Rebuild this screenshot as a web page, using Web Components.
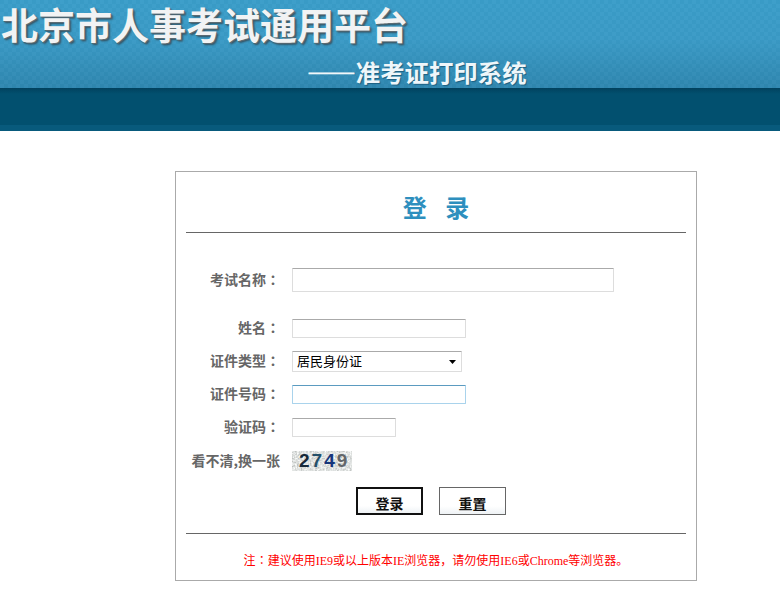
<!DOCTYPE html>
<html lang="zh">
<head>
<meta charset="utf-8">
<title>准考证打印系统</title>
<style>
	html, body { margin: 0; padding: 0; background: #fff; }
	body { font-family: "Liberation Sans", "Noto Sans CJK SC", sans-serif; overflow: hidden; }
	[slot="actions"] { display: flex; gap: 16px; padding-left: 170px; }
	[slot="note"] i { font: 12px "Liberation Serif", serif; }
	[slot="note"] b { font: 12px "Noto Sans CJK TC", sans-serif; }
	[slot="subtitle"] b { font-weight: 700; -webkit-text-stroke: .6px #f4f8fa; text-shadow: none; }
</style>
</head>
<body>
<app-header>
	<span slot="title">北京市人事考试通用平台</span>
	<span slot="subtitle"><b>——</b>准考证打印系统</span>
</app-header>
<login-card heading="登 录">
	<form-row label="考试名称" colon class="first"><text-box width="322" height="24"></text-box></form-row>
	<form-row label="姓名" colon><text-box width="174" height="19"></text-box></form-row>
	<form-row label="证件类型" colon><id-select></id-select></form-row>
	<form-row label="证件号码" colon class="loose"><text-box width="174" height="19" focused></text-box></form-row>
	<form-row label="验证码" colon class="loose"><text-box width="104" height="19"></text-box></form-row>
	<form-row label="看不清,换一张" plain><captcha-image code="2749"></captcha-image></form-row>
	<div slot="actions">
		<action-button primary>登录</action-button>
		<action-button>重置</action-button>
	</div>
	<span slot="note">注<b lang="zh-TW">：</b>建议使用<i>IE9</i>或以上版本<i>IE</i>浏览器，请勿使用<i>IE6</i>或<i>Chrome</i>等浏览器。</span>
</login-card>
<script>
	class AppHeader extends HTMLElement {
		constructor() {
			super();
			this.attachShadow({ mode: "open" });
			this.shadowRoot.innerHTML = `
				<style>
					:host {
						display: block;
						height: 131px;
						background: linear-gradient(#01415e, #02506f 6px, #02506f 37px, #085a7c 37px);
						background-position: 0 88px;
						background-size: 100% 43px;
						background-repeat: no-repeat;
					}
					.top {
						height: 88px;
						overflow: hidden;
						padding-left: 1px;
						background:
							repeating-conic-gradient(rgba(255,255,255,.02) 0 25%, rgba(0,0,0,.015) 0 50%) 0 0 / 8px 8px,
							linear-gradient(#3a9dc9, #3a9ac6 45%, #2f87b0);
						font-family: "Noto Sans CJK SC", sans-serif;
						color: #f1f3f4;
					}
					.title {
						display: block;
						font-size: 37px;
						font-weight: 700;
						line-height: 48px;
						white-space: nowrap;
						text-shadow: 1px 1px 0 #5b6a72, 2px 2px 2px #32505f;
					}
					.subtitle {
						display: block;
						margin: 9px 0 0 306px;
						font-size: 24.4px;
						line-height: 30px;
						font-weight: 700;
						white-space: nowrap;
						text-shadow: 1px 1px 1px #1e5f80;
						color: #eef6fa;
					}
				</style>
				<div class="top">
					<slot class="title" name="title"></slot>
					<slot class="subtitle" name="subtitle"></slot>
				</div>
			`;
		}
	}

	class LoginCard extends HTMLElement {
		constructor() {
			super();
			this.attachShadow({ mode: "open" });
			this.shadowRoot.innerHTML = `
				<style>
					:host {
						display: block;
						box-sizing: border-box;
						width: 522px;
						height: 410px;
						margin: 40px 0 0 175px;
						padding: 0 10px;
						border: 1px solid #aaa;
					}
					h1 {
						margin: 0;
						height: 60px;
						text-align: center;
						font: 700 24px/69px "Noto Sans CJK SC", sans-serif;
						word-spacing: 13px;
						color: #2e8fbe;
						border-bottom: 1px solid #666;
					}
					.fields { display: flex; flex-direction: column; padding-top: 35px; }
					.actions { margin-top: 16px; height: 28px; }
					hr { margin: 18px 0 0; border: 0; border-top: 1px solid #666; }
					.note {
						margin-top: 17px;
						text-align: center;
						font: 12px/16px "Noto Sans CJK SC", sans-serif;
						color: #f00;
					}
				</style>
				<h1></h1>
				<div class="fields"><slot></slot></div>
				<div class="actions"><slot name="actions"></slot></div>
				<hr>
				<div class="note"><slot name="note"></slot></div>
			`;
			this.shadowRoot.querySelector("h1").textContent = this.getAttribute("heading");
		}
	}

	class FormRow extends HTMLElement {
		constructor() {
			super();
			this.attachShadow({ mode: "open" });
			const colon = this.hasAttribute("colon") ? `<span class="colon" lang="zh-TW">：</span>` : "";
			this.shadowRoot.innerHTML = `
				<style>
					:host {
						display: grid;
						grid-template-columns: 94px auto;
						column-gap: 12px;
						justify-content: start;
						align-items: center;
						margin-bottom: 13px;
						font: 700 14px/17px "Noto Sans CJK SC", sans-serif;
						color: #666;
					}
					:host(.first) { margin-bottom: 27px; }
					:host(.loose) { margin-bottom: 14px; }
					:host([plain]) { margin-bottom: 0; }
					.label { padding-bottom: 2px; text-align: right; white-space: nowrap; }
					.colon { font-family: "Noto Sans CJK TC", sans-serif; }
				</style>
				<div class="label">${this.getAttribute("label")}${colon}</div>
				<div><slot></slot></div>
			`;
		}
	}

	class TextBox extends HTMLElement {
		constructor() {
			super();
			this.attachShadow({ mode: "open" });
			const width = this.getAttribute("width");
			const height = this.getAttribute("height");
			this.shadowRoot.innerHTML = `
				<style>
					:host { display: block; }
					input {
						display: block;
						box-sizing: border-box;
						width: ${width}px;
						height: ${height}px;
						margin: 0;
						padding: 0 4px;
						background: #fff;
						outline: 0;
						border: 1px solid #ddd;
						border-top-color: #aaa;
						border-radius: 1px;
					}
					:host([focused]) input { border-color: #a9d3ec; border-top-color: #5b9bc0; }
				</style>
				<input type="text">
			`;
		}
	}

	class IdSelect extends HTMLElement {
		constructor() {
			super();
			this.attachShadow({ mode: "open" });
			this.shadowRoot.innerHTML = `
				<style>
					:host { display: block; }
					.box {
						box-sizing: border-box;
						display: flex;
						align-items: center;
						justify-content: space-between;
						width: 170px;
						height: 21px;
						padding: 0 5px 2px 4px;
						border: 1px solid #ddd;
						border-top-color: #aaa;
						border-radius: 1px;
						font: 400 13px/17px "Noto Sans CJK SC", sans-serif;
						color: #000;
					}
					svg { display: block; margin-top: 3px; }
				</style>
				<div class="box">
					<span>居民身份证</span>
					<svg width="7" height="4" viewBox="0 0 7 4"><path d="M0 0h7L3.5 4z" fill="#000"/></svg>
				</div>
			`;
		}
	}

	class CaptchaImage extends HTMLElement {
		constructor() {
			super();
			this.attachShadow({ mode: "open" });
			const colors = ["#16293a", "#24506a", "#16357a", "#63676a"];
			const digits = this.getAttribute("code").split("").map((digit, index) => `<span style="color:${colors[index]}">${digit}</span>`).join("");
			this.shadowRoot.innerHTML = `
				<style>
					:host { display: block; position: relative; width: 60px; height: 20px; overflow: hidden; background: #c4cbca; }
					svg { position: absolute; left: 0; top: 0; }
					.digits {
						position: relative;
						display: flex;
						gap: 2px;
						padding-left: 7px;
						font: 700 19px/20px "Liberation Sans", sans-serif;
					}
				</style>
				<svg width="60" height="20">
					<filter id="noise">
						<feTurbulence type="fractalNoise" baseFrequency="0.55" numOctaves="2" seed="4"/>
						<feColorMatrix type="matrix" values=".8 0 0 0 .34  .8 0 0 0 .36  .8 0 0 0 .35  0 0 0 0 1"/>
					</filter>
					<rect width="60" height="20" filter="url(#noise)"/>
				</svg>
				<div class="digits">${digits}</div>
			`;
		}
	}

	class ActionButton extends HTMLElement {
		constructor() {
			super();
			this.attachShadow({ mode: "open" });
			this.shadowRoot.innerHTML = `
				<style>
					:host { display: inline-block; }
					button {
						display: block;
						box-sizing: border-box;
						width: 67px;
						height: 28px;
						margin: 0;
						padding: 3px 0 0;
						border: 1px solid #666;
						background: linear-gradient(#fff 70%, #eef2f5);
						font: 700 14px/20px "Noto Sans CJK SC", sans-serif;
						color: #111;
					}
					:host([primary]) button { border: 2px solid #111; }
				</style>
				<button type="button"><slot></slot></button>
			`;
		}
	}

	customElements.define("app-header", AppHeader);
	customElements.define("login-card", LoginCard);
	customElements.define("form-row", FormRow);
	customElements.define("text-box", TextBox);
	customElements.define("id-select", IdSelect);
	customElements.define("captcha-image", CaptchaImage);
	customElements.define("action-button", ActionButton);
</script>
</body>
</html>
